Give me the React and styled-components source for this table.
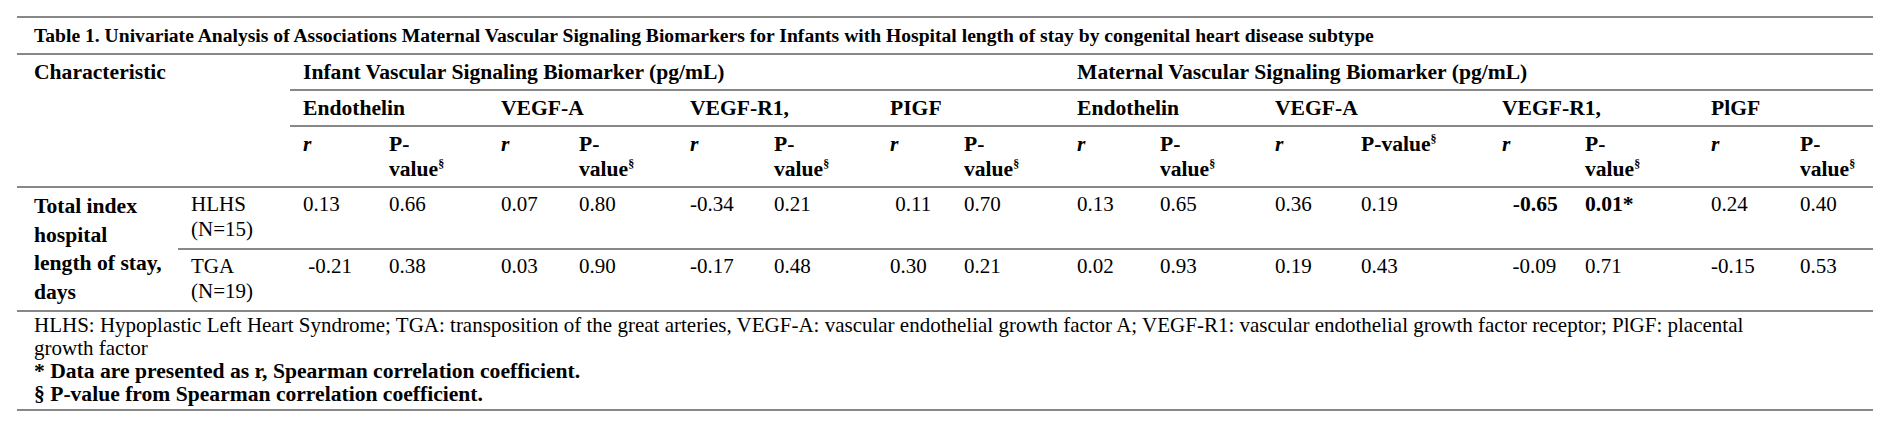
import React from "react"
import styled, { createGlobalStyle } from "styled-components"

const GlobalStyle = createGlobalStyle`
  html, body {
    margin: 0;
    background: #ffffff;
  }

  body {
    font-family: "Liberation Serif", "Times New Roman", serif;
    color: #000000;
  }
`

const RULE = "2px solid #888888"

const columnWidths = [
  161, 112, 86, 112, 78, 111, 84, 116, 74, 113, 83, 115, 86, 141, 83, 126, 89, 86,
]

const infantMarkers = [
  { name: "Endothelin", wrap: true },
  { name: "VEGF-A", wrap: true },
  { name: "VEGF-R1,", wrap: true },
  { name: "PIGF", wrap: true },
]

const maternalMarkers = [
  { name: "Endothelin", wrap: true },
  { name: "VEGF-A", wrap: false },
  { name: "VEGF-R1,", wrap: true },
  { name: "PlGF", wrap: true },
]

const rows = [
  {
    group: "HLHS",
    n: "(N=15)",
    values: [
      "0.13", "0.66", "0.07", "0.80", "-0.34", "0.21", " 0.11", "0.70",
      "0.13", "0.65", "0.36", "0.19", { text: "  -0.65", bold: true },
      { text: "0.01*", bold: true }, "0.24", "0.40",
    ],
  },
  {
    group: "TGA",
    n: "(N=19)",
    values: [
      " -0.21", "0.38", "0.03", "0.90", "-0.17", "0.48", "0.30", "0.21",
      "0.02", "0.93", "0.19", "0.43", "  -0.09", "0.71", "-0.15", "0.53",
    ],
  },
]

export default function App() {
  const markers = [...infantMarkers, ...maternalMarkers]

  return (
    <Page>
      <GlobalStyle />
      <DataTable>
        <colgroup>
          {columnWidths.map((w, i) => (
            <col key={i} style={{ width: w }} />
          ))}
        </colgroup>
        <thead>
          <tr>
            <TitleCell colSpan={18}>
              Table 1. Univariate Analysis of Associations Maternal Vascular
              Signaling Biomarkers for Infants with Hospital length of stay by
              congenital heart disease subtype
            </TitleCell>
          </tr>
          <tr>
            <CornerCell colSpan={2} rowSpan={3} $line>
              Characteristic
            </CornerCell>
            <HeadCell colSpan={8} $line>
              Infant Vascular Signaling Biomarker (pg/mL)
            </HeadCell>
            <HeadCell colSpan={8} $line>
              Maternal Vascular Signaling Biomarker (pg/mL)
            </HeadCell>
          </tr>
          <tr>
            {markers.map((m, i) => (
              <HeadCell key={i} colSpan={2} $line>
                {m.name}
              </HeadCell>
            ))}
          </tr>
          <tr>
            {markers.map((m, i) => (
              <React.Fragment key={i}>
                <HeadCell $line $italic>
                  r
                </HeadCell>
                <HeadCell $line>
                  P-{m.wrap && <br />}value<Sup>§</Sup>
                </HeadCell>
              </React.Fragment>
            ))}
          </tr>
        </thead>
        <tbody>
          {rows.map((row, r) => (
            <tr key={row.group}>
              {r === 0 && (
                <LabelCell rowSpan={2} $line>
                  Total index
                  <br />
                  hospital
                  <br />
                  length of stay,
                  <br />
                  days
                </LabelCell>
              )}
              <Cell $line>
                {row.group}
                <br />
                {row.n}
              </Cell>
              {row.values.map((v, i) =>
                typeof v === "string" ? (
                  <Cell key={i} $line>
                    {v}
                  </Cell>
                ) : (
                  <Cell key={i} $line $bold={v.bold}>
                    {v.text}
                  </Cell>
                )
              )}
            </tr>
          ))}
          <tr>
            <NoteCell colSpan={18}>
              <Note>
                HLHS: Hypoplastic Left Heart Syndrome; TGA: transposition of the
                great arteries, VEGF-A: vascular endothelial growth factor A;
                VEGF-R1: vascular endothelial growth factor receptor; PlGF:
                placental growth factor
              </Note>
              <Note $bold>
                * Data are presented as r, Spearman correlation coefficient.
              </Note>
              <Note $bold>§ P-value from Spearman correlation coefficient.</Note>
            </NoteCell>
          </tr>
        </tbody>
      </DataTable>
    </Page>
  )
}

const Page = styled.div`
  padding: 16px 15px 0 17px;
`

const DataTable = styled.table`
  width: 1856px;
  table-layout: fixed;
  border-collapse: collapse;
  border-top: ${RULE};
  border-bottom: ${RULE};
  font-size: 21px;
  line-height: 25px;
`

const TitleCell = styled.td`
  padding: 5px 12px 5px 17px;
  font-size: 19.6px;
  font-weight: 700;
  text-align: left;
  border-bottom: ${RULE};
  white-space: nowrap;
`

const HeadCell = styled.th`
  padding: 5px 10px 4px 13px;
  font-size: 21.6px;
  font-weight: 700;
  font-style: ${(p) => (p.$italic ? "italic" : "normal")};
  text-align: left;
  vertical-align: top;
  white-space: nowrap;
  border-bottom: ${(p) => (p.$line ? RULE : "none")};
`

const CornerCell = styled(HeadCell)`
  padding-left: 17px;
`

const Cell = styled.td`
  padding: 4px 10px 4px 13px;
  font-size: ${(p) => (p.$bold ? "21.6px" : "21px")};
  font-weight: ${(p) => (p.$bold ? 700 : 400)};
  vertical-align: top;
  white-space: pre;
  border-bottom: ${(p) => (p.$line ? RULE : "none")};
`

const LabelCell = styled(Cell)`
  padding-left: 17px;
  font-size: 21.6px;
  font-weight: 700;
  line-height: 28.5px;
  white-space: nowrap;
`

const Sup = styled.sup`
  font-size: 12px;
  line-height: 0;
  vertical-align: 8px;
`

const NoteCell = styled.td`
  padding: 2px 12px 3px 17px;
  border-top: ${RULE};
`

const Note = styled.div`
  font-size: ${(p) => (p.$bold ? "21.6px" : "21px")};
  font-weight: ${(p) => (p.$bold ? 700 : 400)};
  line-height: 23px;
  max-width: 1720px;
`
